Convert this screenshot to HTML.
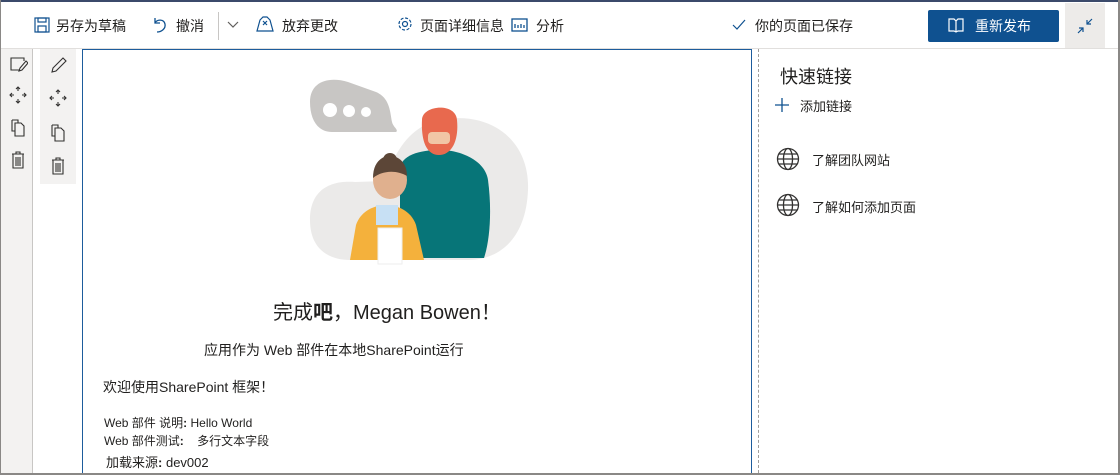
<!DOCTYPE html>
<html><head><meta charset="utf-8"><style>
*{margin:0;padding:0;box-sizing:border-box}
body{width:1120px;height:475px;overflow:hidden;background:#fff;font-family:"Liberation Sans","Noto Sans CJK SC",sans-serif;color:#201f1e;position:relative}
.a{position:absolute}
.t{font-size:14px;white-space:nowrap}
svg{position:absolute}
</style></head><body>
<div class="a" style="left:0;top:0;width:1120px;height:2px;background:#3b4a6b"></div>
<!-- toolbar -->
<svg style="left:34px;top:17px" width="16" height="16" viewBox="0 0 16 16" fill="none" stroke="#0f5190" stroke-width="1.2"><rect x="1" y="1" width="14" height="14"/><rect x="4" y="1" width="8" height="4"/><rect x="4" y="9" width="8" height="6"/></svg>
<div class="a t" style="left:56px;top:16px">另存为草稿</div>
<svg style="left:152px;top:16px" width="16" height="18" viewBox="0 0 16 18" fill="none" stroke="#0f5190" stroke-width="1.3"><path d="M3 2v5h5"/><path d="M3 7c2-4 9-4 10 1s-4 8-8 8"/></svg>
<div class="a t" style="left:176px;top:16px">撤消</div>
<div class="a" style="left:218px;top:12px;width:1px;height:28px;background:#c8c6c4"></div>
<svg style="left:227px;top:21px" width="12" height="8" viewBox="0 0 12 8" fill="none" stroke="#605e5c" stroke-width="1.2"><path d="M1 1l5 5 5-5"/></svg>
<svg style="left:256px;top:16px" width="18" height="16" viewBox="0 0 18 16" fill="none" stroke="#0f5190" stroke-width="1.2"><path d="M1 15h16L14 4 11 1 7 1 4 4z"/><path d="M7 5l4 4M11 5l-4 4"/></svg>
<div class="a t" style="left:282px;top:16px">放弃更改</div>
<svg style="left:397px;top:16px" width="16" height="16" viewBox="0 0 16 16" fill="none" stroke="#0f5190" stroke-width="1.2"><circle cx="8" cy="8" r="2.5"/><circle cx="8" cy="8" r="6" stroke-dasharray="3 1.7"/></svg>
<div class="a t" style="left:420px;top:16px">页面详细信息</div>
<svg style="left:511px;top:18px" width="17" height="14" viewBox="0 0 17 14" fill="none" stroke="#0f5190" stroke-width="1.3"><rect x="1" y="1" width="15" height="12"/><path d="M4 10V6M7 10V7M10 10V6M13 10V7" /></svg>
<div class="a t" style="left:536px;top:16px">分析</div>
<svg style="left:732px;top:19px" width="14" height="12" viewBox="0 0 14 12" fill="none" stroke="#0f5190" stroke-width="1.2"><path d="M1 6l4 4 8-9"/></svg>
<div class="a t" style="left:755px;top:16px">你的页面已保存</div>
<div class="a" style="left:928px;top:10px;width:131px;height:32px;background:#0f5190;border-radius:2px"></div>
<svg style="left:948px;top:18px" width="16" height="15" viewBox="0 0 16 15" fill="none" stroke="#fff" stroke-width="1.2"><path d="M1 1h5l2 2 2-2h5v12h-5l-2 1-2-1H1z M8 3v11"/></svg>
<div class="a t" style="left:975px;top:16px;color:#fff">重新发布</div>
<div class="a" style="left:1065px;top:3px;width:40px;height:46px;background:#edebe9"></div>
<svg style="left:1077px;top:18px" width="16" height="16" viewBox="0 0 16 16" fill="none" stroke="#0f5190" stroke-width="1.2"><path d="M1 15l5-5M2 10h4v4M15 1l-5 5M10 2v4h4"/></svg>
<div class="a" style="left:0;top:48px;width:1118px;height:1px;background:#e1dfdd"></div>
<!-- left rails -->
<div class="a" style="left:1px;top:49px;width:31px;height:424px;background:#f3f2f1"></div>
<div class="a" style="left:32px;top:49px;width:1px;height:424px;background:#c8c6c4"></div>
<div class="a" style="left:40px;top:49px;width:36px;height:135px;background:#f3f2f1"></div>
<svg style="left:10px;top:56px" width="18" height="18" viewBox="0 0 18 18" fill="none" stroke="#323130" stroke-width="1.1"><path d="M10 14H1V2h13v3"/><path d="M9 15l1-3 6-7 2 2-6 7z"/></svg>
<svg style="left:50px;top:56px" width="18" height="18" viewBox="0 0 18 18" fill="none" stroke="#323130" stroke-width="1.1"><path d="M2 16l1-4L13 2l3 3L6 15z"/></svg>
<svg style="left:9px;top:86px" width="18" height="18" viewBox="0 0 18 18" fill="none" stroke="#323130" stroke-width="1.1"><path d="M9 1v4M9 13v4M1 9h4M13 9h4M7 3l2-2 2 2M7 15l2 2 2-2M3 7L1 9l2 2M15 7l2 2-2 2"/></svg>
<svg style="left:49px;top:89px" width="18" height="18" viewBox="0 0 18 18" fill="none" stroke="#323130" stroke-width="1.1"><path d="M9 1v4M9 13v4M1 9h4M13 9h4M7 3l2-2 2 2M7 15l2 2 2-2M3 7L1 9l2 2M15 7l2 2-2 2"/></svg>
<svg style="left:11px;top:119px" width="15" height="18" viewBox="0 0 15 18" fill="none" stroke="#323130" stroke-width="1.1"><path d="M1 1h6v3M1 1v11h3"/><path d="M4 4h6l3 3v10H4z"/></svg>
<svg style="left:51px;top:124px" width="15" height="18" viewBox="0 0 15 18" fill="none" stroke="#323130" stroke-width="1.1"><path d="M1 1h6v3M1 1v11h3"/><path d="M4 4h6l3 3v10H4z"/></svg>
<svg style="left:11px;top:151px" width="14" height="18" viewBox="0 0 14 18" fill="none" stroke="#323130" stroke-width="1.1"><path d="M1 3h12M5 3V1h4v2M2 3v14h10V3M5 6v9M7 6v9M9 6v9"/></svg>
<svg style="left:51px;top:157px" width="14" height="18" viewBox="0 0 14 18" fill="none" stroke="#323130" stroke-width="1.1"><path d="M1 3h12M5 3V1h4v2M2 3v14h10V3M5 6v9M7 6v9M9 6v9"/></svg>
<!-- content box -->
<div class="a" style="left:82px;top:49px;width:670px;height:424px;border:1px solid #1d5c9c;border-bottom:none"></div>
<div class="a" style="left:758px;top:49px;width:0;height:424px;border-left:1px dashed #a19f9d"></div>
<!-- illustration -->
<svg style="left:300px;top:70px" width="240" height="200" viewBox="0 0 240 200">
<path d="M140 50c50-10 90 20 88 70s-30 70-60 70H50c-20 0-40-10-40-40s20-40 45-38l30-1c10-30 25-55 55-61z" fill="#ebeae9"/>
<path d="M10 32C10 12 28 6 48 12L76 22C90 28 90 42 92 52C93 57 99 60 96 62H32C18 62 10 50 10 32z" fill="#c8c6c4"/>
<circle cx="30" cy="40" r="7" fill="#fff"/><circle cx="49" cy="41" r="6" fill="#fff"/><circle cx="66" cy="42" r="5" fill="#fff"/>
<path d="M100 100c0-15 20-20 40-20s45 10 48 30c4 30 2 60-4 78H100z" fill="#077578"/>
<path d="M122 50c0-15 34-18 35 0 2 20-5 35-18 35s-18-15-17-35z" fill="#e8694e"/>
<rect x="128" y="62" width="22" height="12" rx="4" fill="#f1c6a6"/>
<path d="M56 155c5-15 20-20 30-20s25 5 30 20l8 35H50z" fill="#f4b13c"/>
<rect x="76" y="135" width="22" height="20" fill="#c7e0f4"/>
<circle cx="90" cy="90" r="7" fill="#5c4637"/>
<ellipse cx="90" cy="110" rx="17" ry="19" fill="#e0b08e"/>
<path d="M73 108c0-15 8-22 17-22s17 7 17 20c-10-6-24-6-34 2z" fill="#5c4637"/>
<rect x="78" y="158" width="24" height="36" fill="#fff" stroke="#eee"/>
</svg>
<!-- text -->
<div class="a" style="left:273px;top:296px;font-size:20px;white-space:nowrap">完成<b>吧</b>，Megan Bowen！</div>
<div class="a t" style="left:204px;top:340px">应用作为 Web 部件在本地SharePoint运行</div>
<div class="a t" style="left:103px;top:377px">欢迎使用SharePoint 框架！</div>
<div class="a" style="left:104px;top:414px;font-size:12px;white-space:nowrap">Web 部件 说明<b>:</b> Hello World</div>
<div class="a" style="left:104px;top:432px;font-size:12px;white-space:nowrap">Web 部件测试<b>:</b> &nbsp;&nbsp;&nbsp;多行文本字段</div>
<div class="a" style="left:106px;top:452px;font-size:13px;white-space:nowrap">加载来源<b>:</b> dev002</div>
<!-- right panel -->
<div class="a" style="left:780px;top:63px;font-size:18px;white-space:nowrap">快速链接</div>
<svg style="left:774px;top:97px" width="16" height="16" viewBox="0 0 16 16" stroke="#0f5190" stroke-width="1.3"><path d="M8 1v14M1 8h14"/></svg>
<div class="a" style="left:800px;top:96px;font-size:13px;white-space:nowrap">添加链接</div>
<svg style="left:776px;top:147px" width="24" height="24" viewBox="0 0 24 24" fill="none" stroke="#323130" stroke-width="1.3"><circle cx="12" cy="12" r="10.5"/><ellipse cx="12" cy="12" rx="4.5" ry="10.5"/><path d="M1.5 12h21M3 7h18M3 17h18"/></svg>
<div class="a" style="left:812px;top:150px;font-size:13px;white-space:nowrap">了解团队网站</div>
<svg style="left:776px;top:193px" width="24" height="24" viewBox="0 0 24 24" fill="none" stroke="#323130" stroke-width="1.3"><circle cx="12" cy="12" r="10.5"/><ellipse cx="12" cy="12" rx="4.5" ry="10.5"/><path d="M1.5 12h21M3 7h18M3 17h18"/></svg>
<div class="a" style="left:812px;top:197px;font-size:13px;white-space:nowrap">了解如何添加页面</div>
<div class="a" style="left:1118px;top:0;width:2px;height:475px;background:#8a8886"></div>
<div class="a" style="left:0;top:473px;width:1120px;height:2px;background:#8a8886"></div>
<div class="a" style="left:0;top:0;width:1px;height:475px;background:#8a8886"></div>
</body></html>
